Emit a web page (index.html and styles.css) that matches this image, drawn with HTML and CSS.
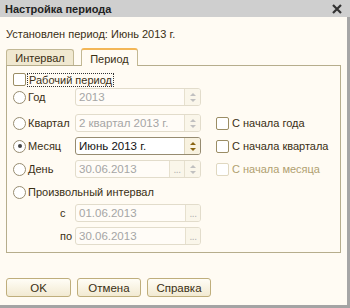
FILE: index.html
```html
<!DOCTYPE html>
<html>
<head>
    <title>Настройка периода</title>
    <link rel="stylesheet" href="styles.css">
</head>
<body>
    <div class="window">
        <div class="title-bar">
            <span class="title">Настройка периода</span>
            <svg class="close-icon" width="10" height="10" viewBox="0 0 10 10">
                <path d="M1 1 L9 9 M9 1 L1 9" stroke="#333" stroke-width="2.2"/>
            </svg>
        </div>
        <div class="content">
            <div class="status">Установлен период: Июнь 2013 г.</div>

            <div class="tabs">
                <div class="tab">Интервал</div>
                <div class="tab active">Период</div>
            </div>

            <div class="panel">
                <div class="work-row">
                    <span class="checkbox"></span>
                    <span class="focus-label">Рабочий период</span>
                </div>

                <div class="grid">
                    <label class="radio-label"><span class="radio"></span>Год</label>
                    <div class="field disabled">
                        <span class="field-text">2013</span>
                        <span class="spin"><i class="up"></i><i class="down"></i></span>
                    </div>
                    <div></div>
                </div>

                <div class="grid next">
                    <label class="radio-label"><span class="radio"></span>Квартал</label>
                    <div class="field disabled">
                        <span class="field-text">2 квартал 2013 г.</span>
                        <span class="spin"><i class="up"></i><i class="down"></i></span>
                    </div>
                    <label class="check-label"><span class="checkbox"></span>С начала года</label>

                    <label class="radio-label"><span class="radio checked"></span>Месяц</label>
                    <div class="field active">
                        <span class="field-text">Июнь 2013 г.</span>
                        <span class="spin"><i class="up"></i><i class="down"></i></span>
                    </div>
                    <label class="check-label"><span class="checkbox"></span>С начала квартала</label>

                    <label class="radio-label"><span class="radio"></span>День</label>
                    <div class="field disabled">
                        <span class="field-text">30.06.2013</span>
                        <span class="dots">...</span>
                        <span class="spin"><i class="up"></i><i class="down"></i></span>
                    </div>
                    <label class="check-label off"><span class="checkbox"></span>С начала месяца</label>
                </div>

                <label class="radio-label wide"><span class="radio"></span>Произвольный интервал</label>

                <div class="range">
                    <span class="range-label">с</span>
                    <div class="field disabled short">
                        <span class="field-text">01.06.2013</span>
                        <span class="dots">...</span>
                    </div>
                    <span class="range-label">по</span>
                    <div class="field disabled short">
                        <span class="field-text">30.06.2013</span>
                        <span class="dots">...</span>
                    </div>
                </div>
            </div>

            <div class="buttons">
                <button class="btn ok">OK</button>
                <button class="btn">Отмена</button>
                <button class="btn">Справка</button>
            </div>
        </div>
    </div>
</body>
</html>
```

FILE: styles.css
```css
body {
    margin: 0;
    font-family: "Liberation Sans", Arial, sans-serif;
    font-size: 11px;
    color: #3a2f14;
}
.window {
    width: 350px;
    height: 308px;
    box-sizing: border-box;
    display: flex;
    flex-direction: column;
    background-color: #fffbf3;
    border-bottom: 3px solid #a4a4a4;
}
.title-bar {
    height: 17px;
    flex: none;
    display: flex;
    align-items: center;
    justify-content: space-between;
    padding: 0 8px 0 5px;
    background-color: #cfcfcf;
}
.title {
    font-weight: bold;
    font-size: 11px;
    color: #222;
}
.content {
    flex: 1;
    border-right: 3px solid #a6a6a6;
    padding: 0 6px 0 6px;
}
.status {
    margin-top: 11px;
    height: 13px;
    line-height: 13px;
}
.tabs {
    display: flex;
    align-items: flex-end;
    margin-top: 6px;
    height: 18px;
}
.tab {
    width: 68px;
    height: 16px;
    line-height: 16px;
    text-align: center;
    box-sizing: border-box;
    border: 1px solid #c2b894;
    border-bottom: none;
    border-radius: 3px 3px 0 0;
    background-color: #f0e8d0;
}
.tab.active {
    width: 57px;
    height: 18px;
    line-height: 18px;
    margin-left: 7px;
    margin-bottom: -1px;
    position: relative;
    background-color: #fffbf3;
    border-top: 2px solid #f3b656;
}
.panel {
    height: 188px;
    box-sizing: border-box;
    border: 1px solid #b6ad8c;
    padding: 7px 0 0 6px;
}
.work-row {
    display: flex;
    align-items: center;
    height: 13px;
}
.focus-label {
    margin-left: 2px;
    padding: 0 1px;
    outline: 1px dotted #333;
    line-height: 12px;
}
.checkbox {
    width: 11px;
    height: 11px;
    flex: none;
    border: 1px solid #9b8d64;
    border-radius: 2px;
    background-color: #fff;
}
.radio {
    width: 11px;
    height: 11px;
    flex: none;
    border: 1px solid #978c70;
    border-radius: 50%;
    background-color: #fff;
    margin-right: 2px;
    display: flex;
    align-items: center;
    justify-content: center;
}
.radio.checked::after {
    content: "";
    width: 4px;
    height: 4px;
    border-radius: 50%;
    background-color: #444;
}
.grid {
    display: grid;
    grid-template-columns: 62px 126px 1fr;
    grid-auto-rows: 18px;
    row-gap: 5px;
    margin-top: 2px;
    align-items: center;
}
.grid.next {
    margin-top: 8px;
}
.radio-label {
    display: flex;
    align-items: center;
    height: 18px;
}
.radio-label.wide {
    margin-top: 5px;
}
.check-label {
    display: flex;
    align-items: center;
    gap: 3px;
    margin-left: 15px;
}
.check-label.off {
    color: #b0a070;
}
.check-label.off .checkbox {
    border-color: #e0d8c0;
}
.field {
    height: 18px;
    box-sizing: border-box;
    display: flex;
    align-items: stretch;
    border: 1px solid #e2dccb;
    border-radius: 3px;
    background-color: #fffcf7;
    color: #a5a5a5;
    font-size: 11.5px;
}
.field.active {
    border-color: #968b70;
    background-color: #fff;
    color: #111;
}
.field-text {
    flex: 1;
    padding-left: 3px;
    line-height: 16px;
    white-space: nowrap;
    overflow: hidden;
}
.spin {
    width: 15px;
    flex: none;
    border-left: 1px solid #e6e0ce;
    display: flex;
    flex-direction: column;
    align-items: center;
    justify-content: center;
    gap: 3px;
    background-color: #faf6ea;
    border-radius: 0 2px 2px 0;
}
.field.active .spin {
    border-left-color: #ddd5bd;
    background-color: #f8f2e0;
}
.spin i {
    width: 0;
    height: 0;
    border-left: 3px solid transparent;
    border-right: 3px solid transparent;
}
.spin .up {
    border-bottom: 3px solid #c0c0c0;
}
.spin .down {
    border-top: 3px solid #c0c0c0;
}
.field.active .spin .up {
    border-bottom-color: #8a6410;
}
.field.active .spin .down {
    border-top-color: #8a6410;
}
.dots {
    width: 14px;
    flex: none;
    border-left: 1px solid #e6e0ce;
    background-color: #faf6ea;
    color: #b0b0b0;
    text-align: center;
    line-height: 18px;
    font-size: 10px;
    letter-spacing: -0.5px;
}
.field.short .dots {
    border-radius: 0 2px 2px 0;
}
.range {
    display: grid;
    grid-template-columns: 62px 126px;
    grid-auto-rows: 18px;
    row-gap: 5px;
    margin-top: 3px;
    align-items: center;
}
.range-label {
    padding-left: 47px;
}
.buttons {
    display: flex;
    gap: 6px;
    margin-top: 25px;
}
.btn {
    width: 64px;
    height: 19px;
    padding: 0;
    font-family: "Liberation Sans", Arial, sans-serif;
    font-size: 11.5px;
    color: #3a2f14;
    border: 1px solid #bfae7c;
    border-radius: 3px;
    background: linear-gradient(#fffdf6, #f2ead2);
}
.btn.ok {
    width: 65px;
}
```
